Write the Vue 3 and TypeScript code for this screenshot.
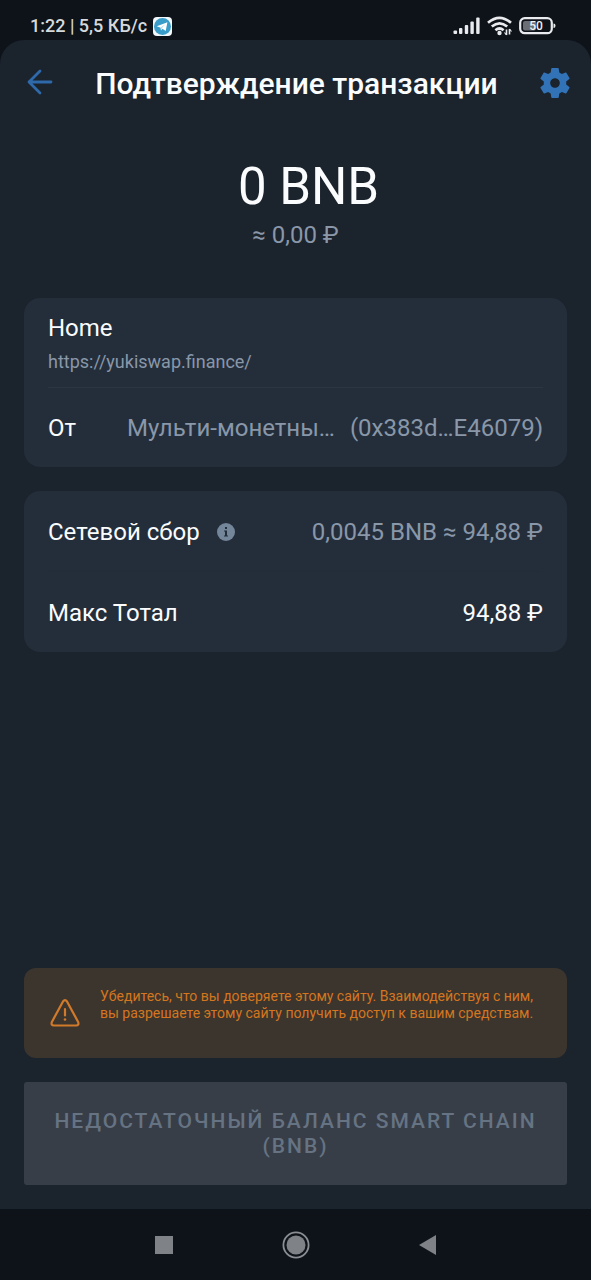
<script setup lang="ts">
interface Transaction {
  amount: string
  fiat: string
  siteName: string
  siteUrl: string
  wallet: string
  address: string
  fee: string
  total: string
}

const tx: Transaction = {
  amount: '0 BNB',
  fiat: '≈ 0,00 ₽',
  siteName: 'Home',
  siteUrl: 'https://yukiswap.finance/',
  wallet: 'Мульти-монетны…',
  address: '(0x383d…E46079)',
  fee: '0,0045 BNB ≈ 94,88 ₽',
  total: '94,88 ₽',
}
</script>

<template>
  <div class="screen">
    <div class="status">
      <div class="status-left">
        <span>1:22 | 5,5 КБ/с</span>
        <svg width="19" height="19" viewBox="0 0 19 19" aria-hidden="true">
          <rect width="19" height="19" rx="4" fill="#f2f8fb" />
          <circle cx="9.5" cy="9.5" r="8.5" fill="#3a9cc8" />
          <path d="M3.8 9.3 14.4 5.2 12.7 14 9.5 11.8 8 13.4 7.6 10.7Z" fill="#fff" />
          <path d="M7.6 10.7 12.3 7.2 8.7 11.2 8 13.4Z" fill="#a9d3e6" />
        </svg>
      </div>
      <div class="status-right">
        <svg width="28" height="18" viewBox="0 0 28 18" aria-hidden="true" fill="#e9ebee">
          <rect x="0.500" y="13.500" width="3.600" height="3.500" rx="1" />
          <rect x="6" y="11" width="3.400" height="6" rx="1" />
          <rect x="11.800" y="8" width="3.400" height="9" rx="1" />
          <rect x="17.400" y="4.500" width="3.400" height="12.500" rx="1" />
          <rect x="23.200" y="0.500" width="3.400" height="16.500" rx="1" />
        </svg>
        <svg width="26" height="20" viewBox="0 0 26 20" aria-hidden="true" fill="none" stroke="#e9ebee" stroke-width="2.7">
          <path d="M1 6.8Q12.500-3.200 24 6.800" />
          <path d="M4.800 10.600Q12.500 4 20.200 10.600" />
          <path d="M8.400 14.200Q12.500 10.800 16.600 14.200" />
          <circle cx="12.500" cy="17" r="2.200" fill="#e9ebee" stroke="none" />
          <path d="M19.500 13.500v5.500M22.500 13v5.500" stroke-width="1.600" />
          <path d="M17.500 16.500l2 2.500M24.500 15.500l-2-2.500" stroke-width="1.200" />
        </svg>
        <svg width="37" height="18" viewBox="0 0 37 18" aria-hidden="true">
          <rect x="1.200" y="1.200" width="31.600" height="15" rx="4.500" fill="none" stroke="#e9ebee" stroke-width="2.200" />
          <rect x="4" y="4" width="13" height="9.500" rx="2" fill="#6b6f75" />
          <path d="M34.500 6.500Q36.500 6.500 36.500 8.700 36.500 11 34.500 11Z" fill="#e9ebee" />
          <text x="17" y="13" text-anchor="middle" class="battery">50</text>
        </svg>
      </div>
    </div>

    <main class="sheet">
      <header class="header">
        <button type="button" class="icon-button" aria-label="Назад">
          <svg width="32" height="32" viewBox="0 0 32 32" fill="none" stroke="#2e69aa" stroke-width="2.800" stroke-linecap="round" stroke-linejoin="round">
            <path d="M27 15H5M16 4 5 15 16 26" />
          </svg>
        </button>
        <h1>Подтверждение транзакции</h1>
        <button type="button" class="icon-button" aria-label="Настройки">
          <svg width="36" height="36" viewBox="0 0 24 24" fill="#3273b8">
            <path d="M19.430 12.980c.04-.320.070-.640.070-.980s-.030-.660-.070-.980l2.110-1.650c.190-.150.240-.420.120-.640l-2-3.460c-.120-.220-.390-.300-.610-.220l-2.490 1c-.520-.400-1.080-.730-1.690-.980l-.380-2.650C14.460 2.180 14.250 2 14 2h-4c-.250 0-.460.180-.490.420l-.380 2.650c-.610.250-1.170.590-1.690.980l-2.490-1c-.230-.090-.490 0-.610.220l-2 3.460c-.130.220-.070.490.120.640l2.110 1.650c-.040.320-.070.650-.070.980s.030.660.070.980l-2.110 1.650c-.190.150-.240.420-.120.640l2 3.460c.120.220.390.300.610.220l2.490-1c.520.400 1.080.730 1.690.980l.380 2.650c.030.240.240.420.490.420h4c.250 0 .460-.180.490-.420l.380-2.650c.610-.250 1.170-.590 1.690-.980l2.490 1c.230.090.490 0 .610-.220l2-3.460c.120-.220.070-.490-.120-.640l-2.110-1.650zM12 15.200c-1.770 0-3.200-1.430-3.200-3.200s1.430-3.200 3.200-3.200 3.200 1.430 3.200 3.200-1.430 3.200-3.200 3.200z" />
          </svg>
        </button>
      </header>

      <section class="summary">
        <p class="amount">{{ tx.amount }}</p>
        <p class="fiat">{{ tx.fiat }}</p>
      </section>

      <section class="card">
        <div class="site">
          <p class="label">{{ tx.siteName }}</p>
          <a class="url" :href="tx.siteUrl">{{ tx.siteUrl }}</a>
        </div>
        <div class="row">
          <span class="label">От</span>
          <span class="muted value">{{ tx.wallet }}</span>
          <span class="muted address">{{ tx.address }}</span>
        </div>
      </section>

      <section class="card">
        <div class="row fee">
          <span class="label">Сетевой сбор</span>
          <button type="button" class="info" aria-label="О сетевом сборе">
            <svg width="18" height="18" viewBox="0 0 18 18">
              <circle cx="9" cy="9" r="9" fill="#74869a" />
              <path d="M8 4h2v2H8zM7 7.500h3v5h1v1H7v-1h1v-4H7z" fill="#232e3c" />
            </svg>
          </button>
          <span class="muted value">{{ tx.fee }}</span>
        </div>
        <div class="row">
          <span class="label">Макс Тотал</span>
          <span class="label value">{{ tx.total }}</span>
        </div>
      </section>

      <div class="warning" role="alert">
        <svg width="30" height="28" viewBox="0 0 30 28" fill="none" stroke="#d17a2c" stroke-width="2.200" stroke-linecap="round" stroke-linejoin="round">
          <path d="M13 2.500Q15-.200 17 2.500L28 22.700Q29.500 26.500 26 26.500H4Q.500 26.500 2 22.700Z" />
          <path d="M15 10v6.500" />
          <circle cx="15" cy="20.500" r="1.300" fill="#d17a2c" stroke="none" />
        </svg>
        <p>Убедитесь, что вы доверяете этому сайту. Взаимодействуя с ним, вы разрешаете этому сайту получить доступ к вашим средствам.</p>
      </div>

      <button type="button" class="submit" disabled>Недостаточный баланс Smart Chain (BNB)</button>
    </main>

    <nav class="nav">
      <button type="button" aria-label="Недавние">
        <svg width="28" height="28" viewBox="0 0 28 28"><rect x="5" y="5" width="18" height="18" fill="#7f8286" /></svg>
      </button>
      <button type="button" aria-label="Домой">
        <svg width="28" height="28" viewBox="0 0 28 28"><circle cx="14" cy="14" r="12.600" fill="none" stroke="#8b8e92" stroke-width="1.800" /><circle cx="14" cy="14" r="9.500" fill="#7f8286" /></svg>
      </button>
      <button type="button" aria-label="Назад">
        <svg width="28" height="28" viewBox="0 0 28 28"><path d="M5 14 22 4V24Z" fill="#7f8286" /></svg>
      </button>
    </nav>
  </div>
</template>

<style>
body {
  margin: 0;
  background: #0e131a;
}
</style>

<style scoped>
.screen {
  display: flex;
  flex-direction: column;
  min-height: 100vh;
  background: #0e131a;
  color: #fafcfe;
  font-family: Roboto, "Noto Sans", sans-serif;
}
.screen * {
  box-sizing: border-box;
}
p,
h1 {
  margin: 0;
}
svg {
  display: block;
  flex: none;
}
button {
  border: 0;
  padding: 0;
  background: none;
  font-family: inherit;
}
.status {
  display: flex;
  align-items: center;
  justify-content: space-between;
  height: 40px;
  padding: 12px 35px 0 30px;
  font-size: 18px;
  font-weight: 500;
  line-height: 28px;
  color: #d6d9dc;
}
.status-left,
.status-right {
  display: flex;
  align-items: center;
  gap: 6px;
}
.battery {
  font-size: 12px;
  font-weight: 500;
  fill: #f1f2f4;
}
.sheet {
  flex: 1;
  display: flex;
  flex-direction: column;
  padding: 0 24px 24px;
  border-radius: 24px 24px 0 0;
  background: #1b232d;
}
.header {
  display: flex;
  align-items: center;
  justify-content: space-between;
  height: 85px;
  margin-right: -6px;
}
.icon-button {
  display: grid;
  place-items: center;
}
h1 {
  padding-top: 2px;
  font-size: 30px;
  font-weight: 500;
  line-height: 36px;
}
.summary {
  padding: 30px 0 47px;
  text-align: center;
}
.amount {
  padding-left: 26px;
  font-size: 51px;
  line-height: 64px;
}
.fiat {
  font-size: 24px;
  line-height: 32px;
  color: #8997a9;
}
.card {
  margin-bottom: 24px;
  padding: 0 24px;
  border-radius: 16px;
  background: #242e3b;
}
.label {
  font-size: 24px;
  line-height: 32px;
}
.site {
  padding: 14px 0 13px;
  border-bottom: 1px solid #2b3644;
}
.url {
  display: block;
  margin-top: 6px;
  font-size: 18px;
  line-height: 24px;
  color: #8997a9;
  text-decoration: none;
}
.row {
  display: flex;
  align-items: center;
  height: 80px;
  padding-top: 1px;
}
.row:last-child {
  padding-top: 2px;
}
.site + .row {
  height: 79px;
  padding-top: 0;
}
.fee {
  height: 81px;
  border-bottom: 1px solid #222c39;
}
.muted {
  font-size: 24px;
  line-height: 32px;
  color: #8997a9;
  white-space: nowrap;
}
.address {
  margin-left: 15px;
}
.info {
  margin-left: 17px;
}
.value {
  margin-left: auto;
}
.warning {
  display: flex;
  gap: 20px;
  min-height: 90px;
  margin-top: auto;
  padding: 20px 24px 20px 26px;
  border-radius: 12px;
  background: #3c352d;
  color: #d5761f;
  font-size: 14px;
  line-height: 17px;
}
.warning svg {
  align-self: center;
}
.submit {
  margin-top: 24px;
  padding: 27px 24px 26px;
  border-radius: 3px;
  background: #383e48;
  color: #667383;
  font-size: 21px;
  font-weight: 500;
  line-height: 25px;
  letter-spacing: 2px;
  text-transform: uppercase;
}
.nav {
  display: flex;
  align-items: center;
  justify-content: center;
  gap: 104px;
  height: 71px;
}
</style>
